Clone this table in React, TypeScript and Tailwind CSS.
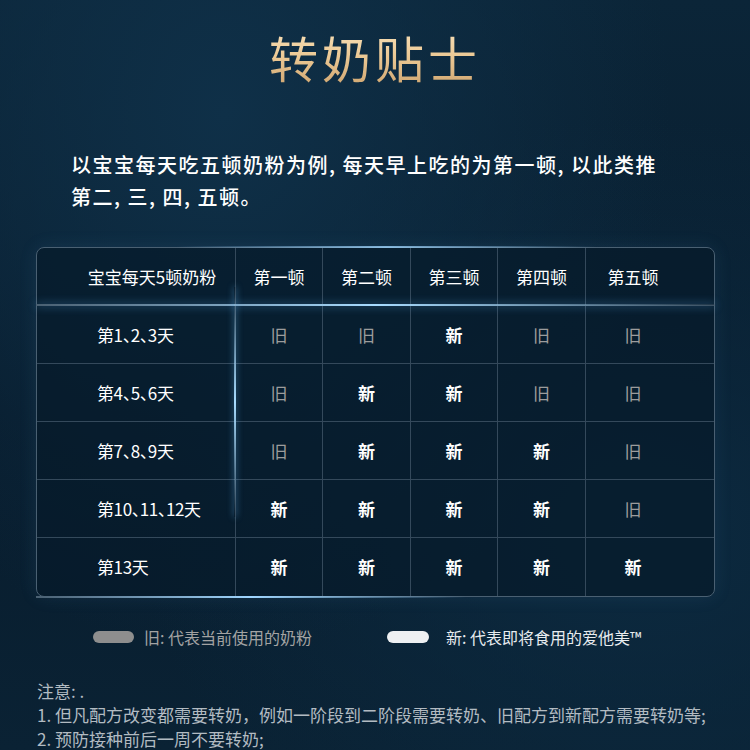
import React from 'react';

type Mark = 'new' | 'old';

const COLUMNS = ['第一顿', '第二顿', '第三顿', '第四顿', '第五顿'];

const ROWS: { label: string; marks: Mark[] }[] = [
  { label: '第1、2、3天', marks: ['old', 'old', 'new', 'old', 'old'] },
  { label: '第4、5、6天', marks: ['old', 'new', 'new', 'old', 'old'] },
  { label: '第7、8、9天', marks: ['old', 'new', 'new', 'new', 'old'] },
  { label: '第10、11、12天', marks: ['new', 'new', 'new', 'new', 'old'] },
  { label: '第13天', marks: ['new', 'new', 'new', 'new', 'new'] },
];

const MarkText = ({ mark }: { mark: Mark }) =>
  mark === 'new' ? (
    <span className="text-[17px] font-bold text-white">新</span>
  ) : (
    <span className="text-[17px] text-[#9c9c9c]">旧</span>
  );

const App = () => {
  return (
    <div
      className="relative flex h-[750px] w-[750px] flex-col overflow-hidden bg-[#0a2236] bg-[radial-gradient(ellipse_at_30%_15%,#0f3048_0%,transparent_60%),radial-gradient(ellipse_at_85%_70%,#0c2a40_0%,transparent_55%),linear-gradient(180deg,#0b2538_0%,#081c2d_55%,#0a2234_100%)] text-white"
      style={{ fontFamily: '"Noto Sans CJK SC", "Noto Sans", sans-serif' }}
    >
      <div className="flex justify-center pt-[27px]">
        <h1 className="bg-gradient-to-b from-[#f8e2bb] via-[#ebc894] to-[#cfa671] bg-clip-text text-[49px] font-normal leading-[60px] tracking-[4px] text-transparent">
          转奶贴士
        </h1>
      </div>

      <div className="mt-[62px] pl-[71px] text-[20px] font-medium leading-[32px] tracking-[1.5px] text-white">
        <p>以宝宝每天吃五顿奶粉为例, 每天早上吃的为第一顿, 以此类推</p>
        <p>第二, 三, 四, 五顿。</p>
      </div>

      <div className="relative ml-[36px] mt-[34px] w-[679px]">
        <div className="grid grid-cols-[199px_87px_88px_87px_88px_1fr] overflow-hidden rounded-[8px] border border-[#4a6072] bg-[#06192a]/70 shadow-[0_0_18px_rgba(90,150,200,0.12)]">
          <div className="flex h-[58px] items-center justify-center border-b border-r border-[#34495b] pl-[32px]">
            <span className="text-[17px] text-white">宝宝每天5顿奶粉</span>
          </div>
          {COLUMNS.map((c, i) => (
            <div
              key={c}
              className={`flex h-[58px] items-center border-b border-[#34495b] ${
                i === COLUMNS.length - 1 ? 'justify-start' : 'justify-center border-r'
              }`}
            >
              {i === COLUMNS.length - 1 ? (
                <div className="flex w-[94px] justify-center">
                  <span className="text-[17px] text-white">{c}</span>
                </div>
              ) : (
                <span className="text-[17px] text-white">{c}</span>
              )}
            </div>
          ))}
          {ROWS.map(({ label, marks }, r) => (
            <React.Fragment key={label}>
              <div
                className={`flex h-[58px] items-center border-r border-[#34495b] pl-[60px] ${
                  r < ROWS.length - 1 ? 'border-b' : ''
                }`}
              >
                <span className="text-[17px] tracking-[-0.4px] text-white [font-feature-settings:'halt']">
                  {label}
                </span>
              </div>
              {marks.map((m, i) => (
                <div
                  key={i}
                  className={`flex h-[58px] items-center border-[#34495b] ${
                    i === marks.length - 1 ? 'justify-start' : 'justify-center border-r'
                  } ${r < ROWS.length - 1 ? 'border-b' : ''}`}
                >
                  {i === marks.length - 1 ? (
                    <div className="flex w-[94px] justify-center">
                      <MarkText mark={m} />
                    </div>
                  ) : (
                    <MarkText mark={m} />
                  )}
                </div>
              ))}
            </React.Fragment>
          ))}
        </div>

        {/* glow lines over the table edges */}
        <div className="pointer-events-none absolute left-[140px] top-[-1px] h-[2px] w-[420px] bg-gradient-to-r from-transparent via-[#9fd6ff] to-transparent opacity-80" />
        <div className="pointer-events-none absolute left-0 top-[57px] h-[2px] w-[679px] bg-gradient-to-r from-[#4a6072] via-[#a8dcff] to-[#4a6072]/40 shadow-[0_0_8px_rgba(95,176,238,0.7)]" />
        <div className="pointer-events-none absolute left-[198px] top-[40px] h-[230px] w-[2px] bg-gradient-to-b from-transparent via-[#a8dcff] to-transparent shadow-[0_0_6px_rgba(95,176,238,0.7)]" />
        <div className="pointer-events-none absolute bottom-[-1px] left-0 h-[2px] w-[430px] bg-gradient-to-r from-[#4a6072] via-[#9fd6ff] to-transparent" />
      </div>

      <div className="mt-[28px] flex items-center text-[16px]">
        <div className="ml-[93px] h-[12px] w-[41px] rounded-full bg-[#8e8e8e]" />
        <span className="ml-[10px] text-[#a3a3a3]">旧: 代表当前使用的奶粉</span>
        <div className="ml-[75px] h-[12px] w-[42px] rounded-full bg-[#eef0f2]" />
        <span className="ml-[17px] text-[#e8ecef]">新: 代表即将食用的爱他美™</span>
      </div>

      <div className="mt-[30px] pl-[37px] text-[17px] leading-[24px] text-[#b2bbc2]">
        <p>注意: .</p>
        <p>1. 但凡配方改变都需要转奶，例如一阶段到二阶段需要转奶、旧配方到新配方需要转奶等;</p>
        <p>2. 预防接种前后一周不要转奶;</p>
      </div>
    </div>
  );
};

export default App;
